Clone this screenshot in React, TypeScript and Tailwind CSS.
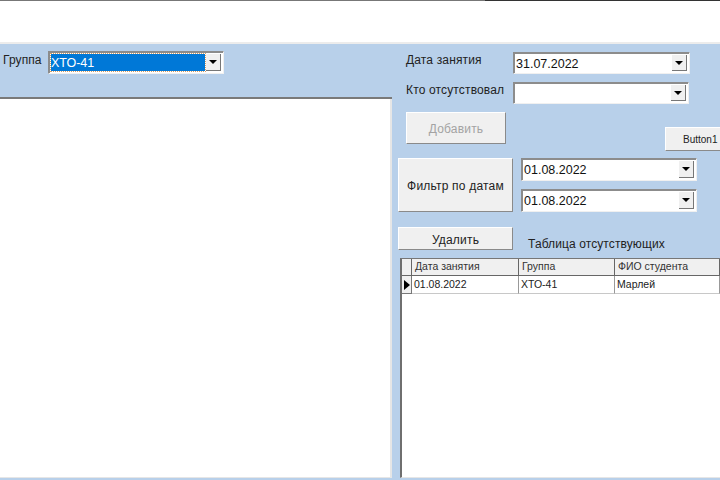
const font = "font-['Liberation_Sans',sans-serif]";

function Arrow() {
  return <span className="block w-0 h-0 border-x-[4px] border-x-transparent border-t-[4px] border-t-black" />;
}

function Combo({ value, className, selected }: { value: string; className: string; selected?: boolean }) {
  return (
    <div className={`flex shrink-0 p-[2px] bg-white border border-[#f0f0f0] border-t-[#8c8c8c] border-l-[#8c8c8c] shadow-[inset_1px_1px_0_#8c8c8c] ${className}`}>
      <div className={`flex-1 min-w-0 flex items-center pt-[2px] text-[12.5px] ${selected ? "bg-[#0078d7] text-white outline-1 outline-dotted outline-[#d9a066]" : "text-[#111]"}`}>
        {value}
      </div>
      <div className="w-[15px] ml-[1px] flex items-center justify-center bg-[#f0f0f0] border-r border-b border-[#777]">
        <Arrow />
      </div>
    </div>
  );
}

function Btn({ children, className, disabled }: { children: string; className: string; disabled?: boolean }) {
  return (
    <div className={`flex shrink-0 items-center justify-center bg-[#f0f0f0] border border-white border-r-[#8a8a8a] border-b-[#8a8a8a] ${disabled ? "text-[#a3a3a3]" : "text-[#222]"} ${className}`}>
      {children}
    </div>
  );
}

function HeadCell({ children, className }: { children?: string; className: string }) {
  return <div className={`h-full flex items-center pl-[3px] bg-[#f0f0f0] border-r border-[#666] border-b text-[10.5px] text-[#333] ${className}`}>{children}</div>;
}

function Cell({ children, className }: { children: string; className: string }) {
  return <div className={`h-full flex items-center pl-[2px] border-r border-r-[#999] border-b border-b-[#c8c8c8] text-[10.5px] text-[#222] ${className}`}>{children}</div>;
}

export default function App() {
  return (
    <div className={`w-[720px] h-[480px] overflow-hidden flex flex-col bg-white ${font}`}>
      <div className="h-[44px] shrink-0 bg-white border-b-2 border-b-[#ececec]">
        <div className="h-[1px] flex">
          <div className="w-[485px] bg-[#777]" />
          <div className="flex-1 bg-[#333]" />
        </div>
      </div>
      <div className="flex-1 min-h-0 flex bg-[#b8d0ea]">
        <div className="w-[392px] shrink-0 flex flex-col pb-[2px]">
          <div className="h-[55px] shrink-0 flex items-start border-b-2 border-[#7a7a7a]">
            <span className="w-[45px] ml-[3px] mt-[7px] text-[12px] tracking-[0.1px] text-[#222]">Группа</span>
            <Combo value="ХТО-41" selected className="mt-[7px] w-[176px] h-[23px]" />
          </div>
          <div className="flex-1 bg-white border-r-2 border-[#e6e6e6] border-b border-b-[#e6e6e6]" />
        </div>
        <div className="flex-1 min-w-0 flex flex-col pb-[2px]">
          <div className="flex items-start pl-[14px] pt-[8px]">
            <span className="w-[107px] -mt-[1px] text-[12px] tracking-[0.15px] text-[#222]">Дата занятия</span>
            <Combo value="31.07.2022" className="w-[177px] h-[22px]" />
          </div>
          <div className="flex items-start pl-[14px] mt-[8px]">
            <span className="w-[107px] -mt-[1px] text-[12px] tracking-[0.15px] text-[#222]">Кто отсутствовал</span>
            <Combo value="" className="w-[176px] h-[22px]" />
          </div>
          <div className="flex items-start pl-[14px] mt-[8px]">
            <Btn disabled className="w-[100px] h-[32px] pt-[2px] text-[12px] tracking-[0.2px]">Добавить</Btn>
            <Btn className="ml-[159px] mt-[15px] w-[60px] h-[24px] text-[10px] justify-start pl-[17px] whitespace-nowrap">Button1</Btn>
          </div>
          <div className="flex items-start pl-[6px] mt-[7px]">
            <Btn className="w-[115px] h-[54px] pt-[2px] text-[12px] tracking-[0.2px]">Фильтр по датам</Btn>
            <div className="ml-[8px] flex flex-col gap-[8px]">
              <Combo value="01.08.2022" className="w-[176px] h-[23px]" />
              <Combo value="01.08.2022" className="w-[176px] h-[23px]" />
            </div>
          </div>
          <div className="flex items-start h-[23px] pl-[6px] mt-[15px]">
            <Btn className="w-[115px] h-[23px] pt-[2px] text-[12px] tracking-[0.2px]">Удалить</Btn>
            <span className="ml-[15px] mt-[8px] text-[12px] tracking-[0.1px] text-[#222]">Таблица отсутствующих</span>
          </div>
          <div className="mt-[8px] ml-[8px] flex-1 min-h-0 bg-white border-l-2 border-[#6f6f6f] border-t border-t-[#777] border-b border-b-[#e6e6e6]">
            <div className="h-[17px] flex">
              <HeadCell className="w-[10px] shrink-0" />
              <HeadCell className="w-[107px] shrink-0">Дата занятия</HeadCell>
              <HeadCell className="w-[96px] shrink-0">Группа</HeadCell>
              <HeadCell className="flex-1">ФИО студента</HeadCell>
            </div>
            <div className="h-[18px] flex">
              <div className="w-[10px] shrink-0 h-full bg-[#f0f0f0] border-r border-b border-[#777] flex items-center justify-center">
                <span className="block w-0 h-0 border-y-[5px] border-y-transparent border-l-[6px] border-l-black" />
              </div>
              <Cell className="w-[107px] shrink-0">01.08.2022</Cell>
              <Cell className="w-[96px] shrink-0">ХТО-41</Cell>
              <Cell className="flex-1">Марлей</Cell>
            </div>
          </div>
        </div>
      </div>
    </div>
  );
}
